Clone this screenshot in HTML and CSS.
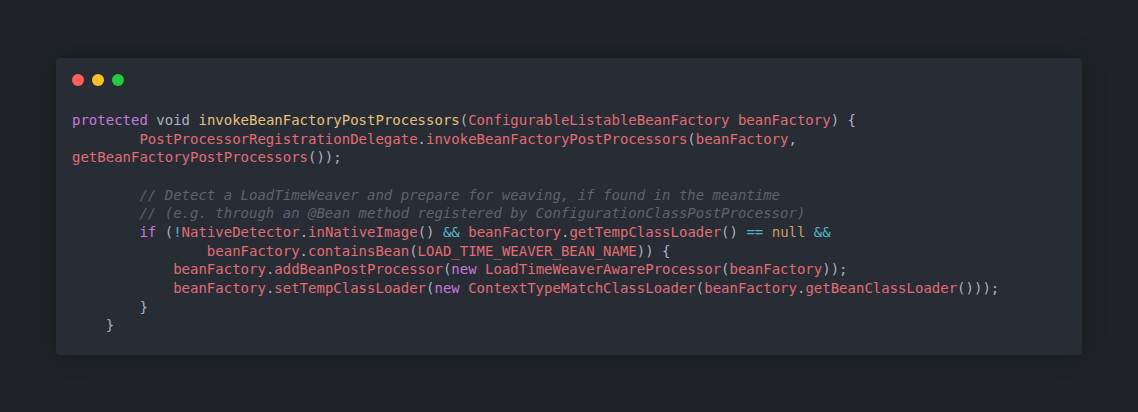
FILE: index.html
```html
<!DOCTYPE html>
<html lang="en">

<head>
    <meta charset="UTF-8">
    <meta name="viewport" content="width=device-width, initial-scale=1.0">
    <title>Code snippet</title>
    <link rel="stylesheet" href="styles.css">
</head>

<body>
    <div class="window">
        <div class="window__bar">
            <span class="dot dot--red"></span>
            <span class="dot dot--yellow"></span>
            <span class="dot dot--green"></span>
        </div>
<pre class="code"><span class="kw">protected</span> <span class="tx">void</span> <span class="fn">invokeBeanFactoryPostProcessors</span><span class="tx">(</span>ConfigurableListableBeanFactory beanFactory<span class="tx">) {</span>
        PostProcessorRegistrationDelegate<span class="tx">.</span>invokeBeanFactoryPostProcessors<span class="tx">(</span>beanFactory<span class="tx">,</span>
getBeanFactoryPostProcessors<span class="tx">());</span>

        <span class="cm">// Detect a LoadTimeWeaver and prepare for weaving, if found in the meantime</span>
        <span class="cm">// (e.g. through an @Bean method registered by ConfigurationClassPostProcessor)</span>
        <span class="kw">if</span> <span class="tx">(</span><span class="op">!</span>NativeDetector<span class="tx">.</span>inNativeImage<span class="tx">()</span> <span class="op">&amp;&amp;</span> beanFactory<span class="tx">.</span>getTempClassLoader<span class="tx">()</span> <span class="op">==</span> <span class="nu">null</span> <span class="op">&amp;&amp;</span>
                beanFactory<span class="tx">.</span>containsBean<span class="tx">(</span>LOAD_TIME_WEAVER_BEAN_NAME<span class="tx">)) {</span>
            beanFactory<span class="tx">.</span>addBeanPostProcessor<span class="tx">(</span><span class="kw">new</span> LoadTimeWeaverAwareProcessor<span class="tx">(</span>beanFactory<span class="tx">));</span>
            beanFactory<span class="tx">.</span>setTempClassLoader<span class="tx">(</span><span class="kw">new</span> ContextTypeMatchClassLoader<span class="tx">(</span>beanFactory<span class="tx">.</span>getBeanClassLoader<span class="tx">()));</span>
        <span class="tx">}</span>
    <span class="tx">}</span></pre>
    </div>
</body>

</html>
```

FILE: styles.css
```css
* {
    box-sizing: border-box;
    margin: 0;
    padding: 0;
}

body {
    background: #1f2228;
    padding: 58px 56px 57px;
    height: 100vh;
}

.window {
    background: #282c34;
    border-radius: 4px;
    height: 297px;
    padding: 16px 16px 0;
    box-shadow: 0 0 24px rgba(0, 0, 0, 0.25);
}

.window__bar {
    display: flex;
    gap: 8px;
    margin-bottom: 25px;
}

.dot {
    width: 12px;
    height: 12px;
    border-radius: 50%;
}

.dot--red {
    background: #ff5f56;
}

.dot--yellow {
    background: #ffbd2e;
}

.dot--green {
    background: #27c93f;
}

.code {
    font-family: "DejaVu Sans Mono", monospace;
    font-size: 14px;
    line-height: 18.65px;
    color: #e06c75;
    white-space: pre;
}

.kw {
    color: #c678dd;
}

.tx {
    color: #abb2bf;
}

.fn {
    color: #e5c07b;
}

.op {
    color: #56b6c2;
}

.nu {
    color: #d19a66;
}

.cm {
    color: #5c6370;
    font-style: italic;
}
```
